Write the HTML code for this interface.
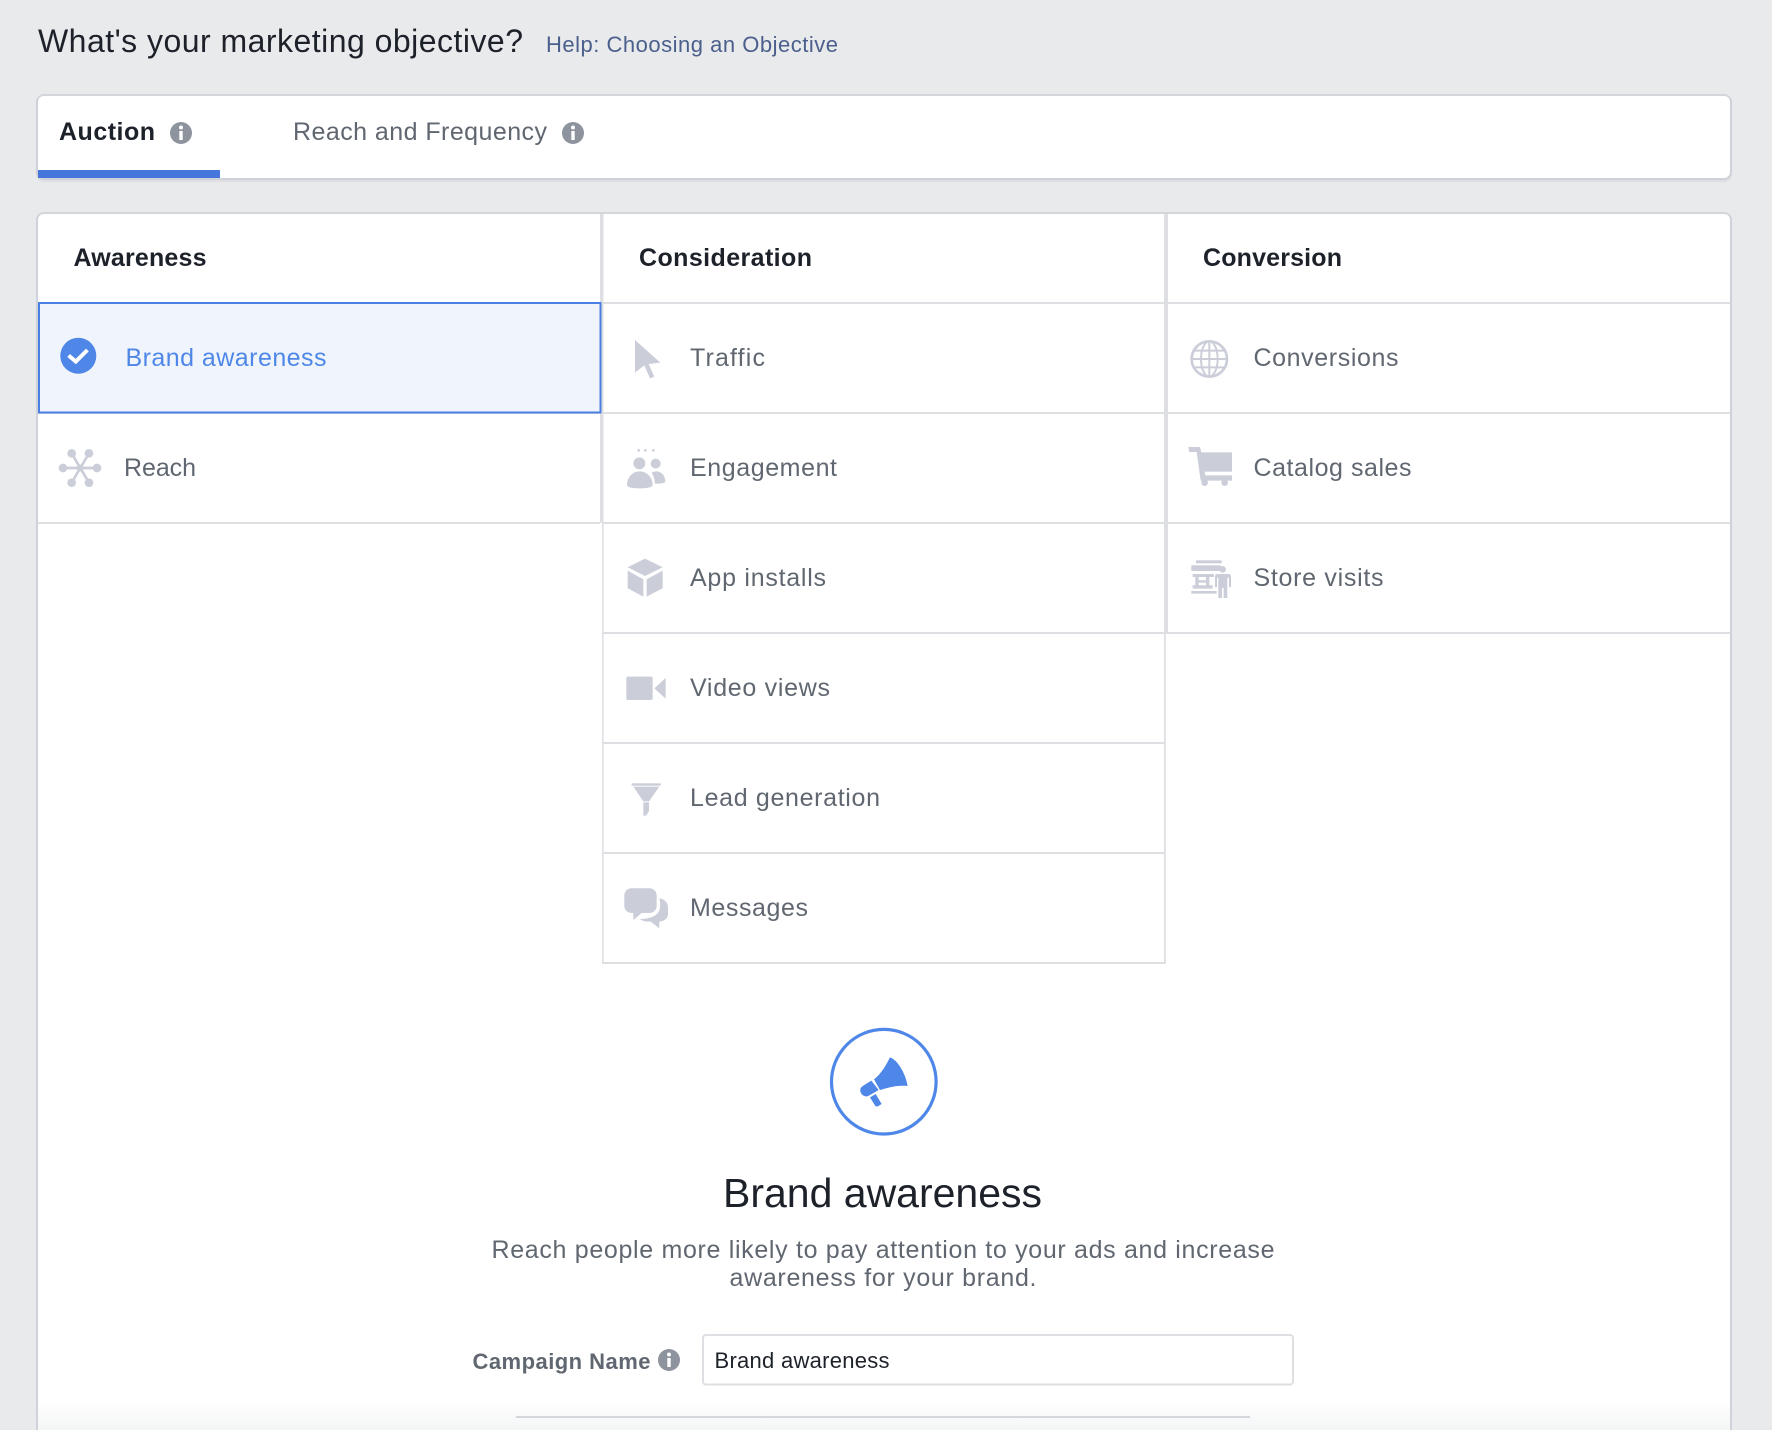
<!DOCTYPE html>
<html><head><meta charset="utf-8"><title>Marketing objective</title>
<style>
html,body{margin:0;padding:0;background:#e9eaec;width:1772px;height:1430px;overflow:hidden}
#wrap{position:relative;width:1772px;height:1430px;overflow:hidden;background:#e9eaec}
.card{position:absolute;background:#fff;box-sizing:border-box;border:2px solid #cfd2da;border-top-color:#d4d6dc}
svg{position:absolute;left:0;top:0}
text{font-family:"Liberation Sans",Arial,sans-serif;white-space:pre}
.t{font-size:25px;fill:#606770}
.h{font-size:25px;fill:#1d2129;font-weight:bold}
.ic{fill:#cbced9}
</style></head><body>
<div id="wrap">
<div class="card" style="left:36px;top:94px;width:1696px;height:86px;border-radius:8px;box-shadow:0 2px 1px rgba(0,0,0,.05)"></div>
<div class="card" style="left:36px;top:212px;width:1696px;height:1218px;border-radius:8px 8px 0 0;border-bottom:0"></div>
<svg width="1772" height="1430" viewBox="0 0 1772 1430" xmlns="http://www.w3.org/2000/svg">
<defs><linearGradient id="fade" x1="0" y1="0" x2="0" y2="1"><stop offset="0" stop-color="#fff"/><stop offset="1" stop-color="#f4f5f6"/></linearGradient></defs>

<text x="38" y="52" font-size="32" fill="#1d2129" textLength="485" lengthAdjust="spacing">What's your marketing objective?</text>
<text x="546" y="52" font-size="22" fill="#4b5f8c" textLength="292" lengthAdjust="spacing">Help: Choosing an Objective</text>

<rect x="38" y="170" width="182" height="8" fill="#4476db"/>
<text x="59" y="140" class="h" textLength="96" lengthAdjust="spacing">Auction</text>
<text x="293" y="140" class="t" textLength="254" lengthAdjust="spacing">Reach and Frequency</text>
<g><circle cx="181" cy="133" r="11" fill="#8d949e"/><circle cx="181" cy="127.5" r="2" fill="#fff"/><rect x="179.3" y="131" width="3.4" height="9" fill="#fff"/></g>
<g><circle cx="573" cy="133" r="11" fill="#8d949e"/><circle cx="573" cy="127.5" r="2" fill="#fff"/><rect x="571.3" y="131" width="3.4" height="9" fill="#fff"/></g>

<!-- grid lines -->
<g fill="#dddfe2">
<rect x="600" y="214" width="3.5" height="309"/>
<rect x="602" y="523" width="1.6" height="441"/>
<rect x="1164" y="214" width="4" height="419"/>
<rect x="1164" y="633" width="1.8" height="331"/>
<rect x="38" y="412" width="562" height="2"/>
<rect x="38" y="522" width="562" height="2"/>
<rect x="603" y="302" width="561" height="2"/>
<rect x="603" y="412" width="561" height="2"/>
<rect x="603" y="522" width="561" height="2"/>
<rect x="603" y="632" width="561" height="2"/>
<rect x="603" y="742" width="561" height="2"/>
<rect x="603" y="852" width="561" height="2"/>
<rect x="602" y="962" width="563.8" height="2"/>
<rect x="1168" y="302" width="562" height="2"/>
<rect x="1168" y="412" width="562" height="2"/>
<rect x="1168" y="522" width="562" height="2"/>
<rect x="1164" y="632" width="566" height="2"/>
</g>
<rect x="39" y="303" width="561.5" height="109.5" fill="#f0f5fd" stroke="#4a80e2" stroke-width="2"/>

<text x="73.5" y="266" class="h" textLength="133" lengthAdjust="spacing">Awareness</text>
<text x="639" y="266" class="h" textLength="173" lengthAdjust="spacing">Consideration</text>
<text x="1203" y="266" class="h" textLength="139" lengthAdjust="spacing">Conversion</text>

<text x="125.5" y="366" font-size="25" fill="#4f87e8" textLength="201" lengthAdjust="spacing">Brand awareness</text>
<text x="124" y="476" class="t" textLength="72" lengthAdjust="spacing">Reach</text>
<text x="690" y="366" class="t" textLength="75" lengthAdjust="spacing">Traffic</text>
<text x="690" y="476" class="t" textLength="147" lengthAdjust="spacing">Engagement</text>
<text x="690" y="586" class="t" textLength="136" lengthAdjust="spacing">App installs</text>
<text x="690" y="696" class="t" textLength="140" lengthAdjust="spacing">Video views</text>
<text x="690" y="806" class="t" textLength="190" lengthAdjust="spacing">Lead generation</text>
<text x="690" y="916" class="t" textLength="118" lengthAdjust="spacing">Messages</text>
<text x="1253.5" y="366" class="t" textLength="145" lengthAdjust="spacing">Conversions</text>
<text x="1253.5" y="476" class="t" textLength="158" lengthAdjust="spacing">Catalog sales</text>
<text x="1253.5" y="586" class="t" textLength="130" lengthAdjust="spacing">Store visits</text>

<!-- check -->
<circle cx="78.3" cy="355.8" r="18" fill="#4f87e8"/>
<path d="M68.6 355.5l7.2 6 11.6-11.5" fill="none" stroke="#fff" stroke-width="4"/>

<!-- reach -->
<g transform="translate(30,290) scale(.3333)">
<g stroke="#cbced9" stroke-width="8"><path d="M125 490L177 578M177 490L125 578M100 534H200"/></g>
<g class="ic"><circle cx="125" cy="490" r="13"/><circle cx="177" cy="490" r="13"/><circle cx="201" cy="534" r="13"/><circle cx="177" cy="578" r="13"/><circle cx="125" cy="578" r="13"/><circle cx="99" cy="534" r="13"/><circle cx="150" cy="534" r="10"/></g>
</g>

<!-- traffic, engagement, cube -->
<g transform="translate(600,320) scale(.3333)" class="ic">
<path d="M105 60L181 128 146 132 163 170 150 175 133 136 105 158Z"/>
<circle cx="116" cy="391" r="4"/><circle cx="136" cy="391" r="4"/><circle cx="160" cy="391" r="4"/>
<circle cx="118" cy="430" r="18"/>
<path d="M81 495c0-26 20-41 38-41s39 15 39 41c0 7-18 10-39 10s-38-3-38-10z"/>
<circle cx="167" cy="431" r="15"/>
<path d="M155 458c4-3 10-4 14-4 16 0 27 14 27 30 0 5-10 7-31 7-1-12-4-23-10-33z"/>
<path d="M135 716L188 742 135 768 83 742Z"/>
<path d="M83 752L130 778V830L83 805Z"/>
<path d="M140 778L188 752V805L140 830Z"/>
</g>

<!-- video, funnel, chat -->
<g transform="translate(600,650) scale(.3333)" class="ic">
<rect x="79" y="80" width="79" height="70" rx="5"/>
<path d="M163 115L197 84V146Z"/>
<rect x="95" y="400" width="87" height="7"/>
<path d="M100 410H178L147 454H130Z"/>
<path d="M130 457H147V483L138 497H130Z"/>
<path d="M95 715H148c13 0 22 9 22 22v30c0 13-9 22-22 22H125L100 810V789H95c-13 0-22-9-22-22V737c0-13 9-22 22-22z"/>
<path d="M178 745c16 3 26 13 26 28v20c0 12-10 21-26 22v20l-26-20c-14 0-24-1-33-8 24 0 50-6 58-24 5-11 4-25 1-38z"/>
</g>

<!-- globe, cart, store -->
<g transform="translate(1170,320) scale(.3333)">
<circle cx="118" cy="117" r="53" fill="none" stroke="#cbced9" stroke-width="8"/>
<g fill="none" stroke="#cbced9" stroke-width="6">
<ellipse cx="118" cy="117" rx="25" ry="53"/>
<path d="M118 64V170M66 117H170M74 92H162M74 142H162"/>
</g>
<g class="ic">
<path d="M55 381H90L94 397H186V455H104L106 466H186V482H172a10 10 0 1 1-16 0H112a10 10 0 1 1-16 0H92L80 396H58Z"/>
<rect x="78" y="721" width="77" height="9"/>
<rect x="64" y="736" width="88" height="17"/>
<path d="M68 762H132V771H118V796H128V806H68V796H76V771H68ZM86 771V781H108V771ZM86 788V796H108V788Z" fill-rule="evenodd"/>
<rect x="64" y="813" width="76" height="8"/>
<circle cx="158" cy="748" r="10"/>
<path d="M142 762H176c4 0 7 3 7 7V802H177V773H172V834H161V804H156V834H145V773H141V802H135V769c0-4 3-7 7-7z"/>
</g>
</g>

<!-- megaphone -->
<circle cx="883.8" cy="1081.7" r="52.3" fill="#fff" stroke="#4f87e8" stroke-width="3.2"/>
<g transform="translate(800,1010) scale(.3333)" fill="#4f87e8">
<path d="M270 142C295 150 318 195 323 228 300 226 280 228 240 240L222 208C245 190 258 165 270 142Z"/>
<path d="M181 238C182 232 186 230 190 227L214 212 236 240 205 258C195 262 185 256 181 245Z"/>
<path d="M210 262L227 252 245 282 232 290 226 288Z"/>
</g>

<text x="723" y="1207" font-size="41" fill="#1d2129" textLength="319" lengthAdjust="spacing">Brand awareness</text>
<text x="491.5" y="1258" class="t" textLength="783" lengthAdjust="spacing">Reach people more likely to pay attention to your ads and increase</text>
<text x="729.5" y="1286" class="t" textLength="307" lengthAdjust="spacing">awareness for your brand.</text>

<rect x="38" y="1402" width="1692" height="28" fill="url(#fade)"/>

<text x="472.5" y="1369" font-size="22" font-weight="bold" fill="#606770" textLength="178" lengthAdjust="spacing">Campaign Name</text>
<g><circle cx="669" cy="1360" r="11" fill="#8d949e"/><circle cx="669" cy="1354.5" r="2" fill="#fff"/><rect x="667.3" y="1358" width="3.4" height="9" fill="#fff"/></g>
<rect x="703" y="1335" width="590" height="49.5" rx="3" fill="#fff" stroke="#dddfe2" stroke-width="2"/>
<text x="714.5" y="1368" font-size="22" fill="#1d2129" textLength="175" lengthAdjust="spacing">Brand awareness</text>
<rect x="516" y="1416" width="734" height="2" fill="#d4d6dc"/>
</svg>
</div>
</body></html>
